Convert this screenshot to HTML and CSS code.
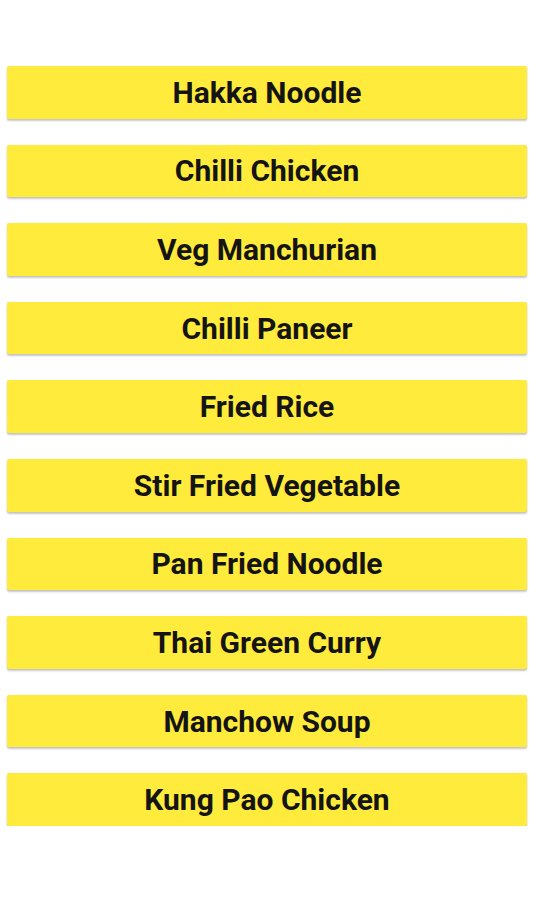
FILE: index.html
```html
<!DOCTYPE html>
<html lang="en">
<head>
  <meta charset="UTF-8">
  <meta name="viewport" content="width=device-width, initial-scale=1.0">
  <title>Menu</title>
  <link rel="stylesheet" href="styles.css">
</head>
<body>
  <div class="menu-list">
    <button class="dish">Hakka Noodle</button>
    <button class="dish">Chilli Chicken</button>
    <button class="dish">Veg Manchurian</button>
    <button class="dish">Chilli Paneer</button>
    <button class="dish">Fried Rice</button>
    <button class="dish">Stir Fried Vegetable</button>
    <button class="dish">Pan Fried Noodle</button>
    <button class="dish">Thai Green Curry</button>
    <button class="dish">Manchow Soup</button>
    <button class="dish">Kung Pao Chicken</button>
  </div>
</body>
</html>
```

FILE: styles.css
```css
body {
  font-family: 'Roboto', 'Liberation Sans', sans-serif;
  background-color: #FFFFFF;
  margin: 0;
}

.menu-list {
  display: flex;
  flex-direction: column;
  gap: 26px;
  padding: 66px 6px 0 7px;
}

.dish {
  height: 52.6px;
  width: 100%;
  background-color: #FFEB3B;
  color: #141414;
  border: none;
  border-radius: 2px;
  box-shadow: 0 2px 2px rgba(0, 0, 0, 0.22), 0 0 1px rgba(0, 0, 0, 0.12);
  font-family: 'Roboto', 'Liberation Sans', sans-serif;
  font-weight: bold;
  font-size: 30px;
  padding: 0;
  cursor: pointer;
}
```
